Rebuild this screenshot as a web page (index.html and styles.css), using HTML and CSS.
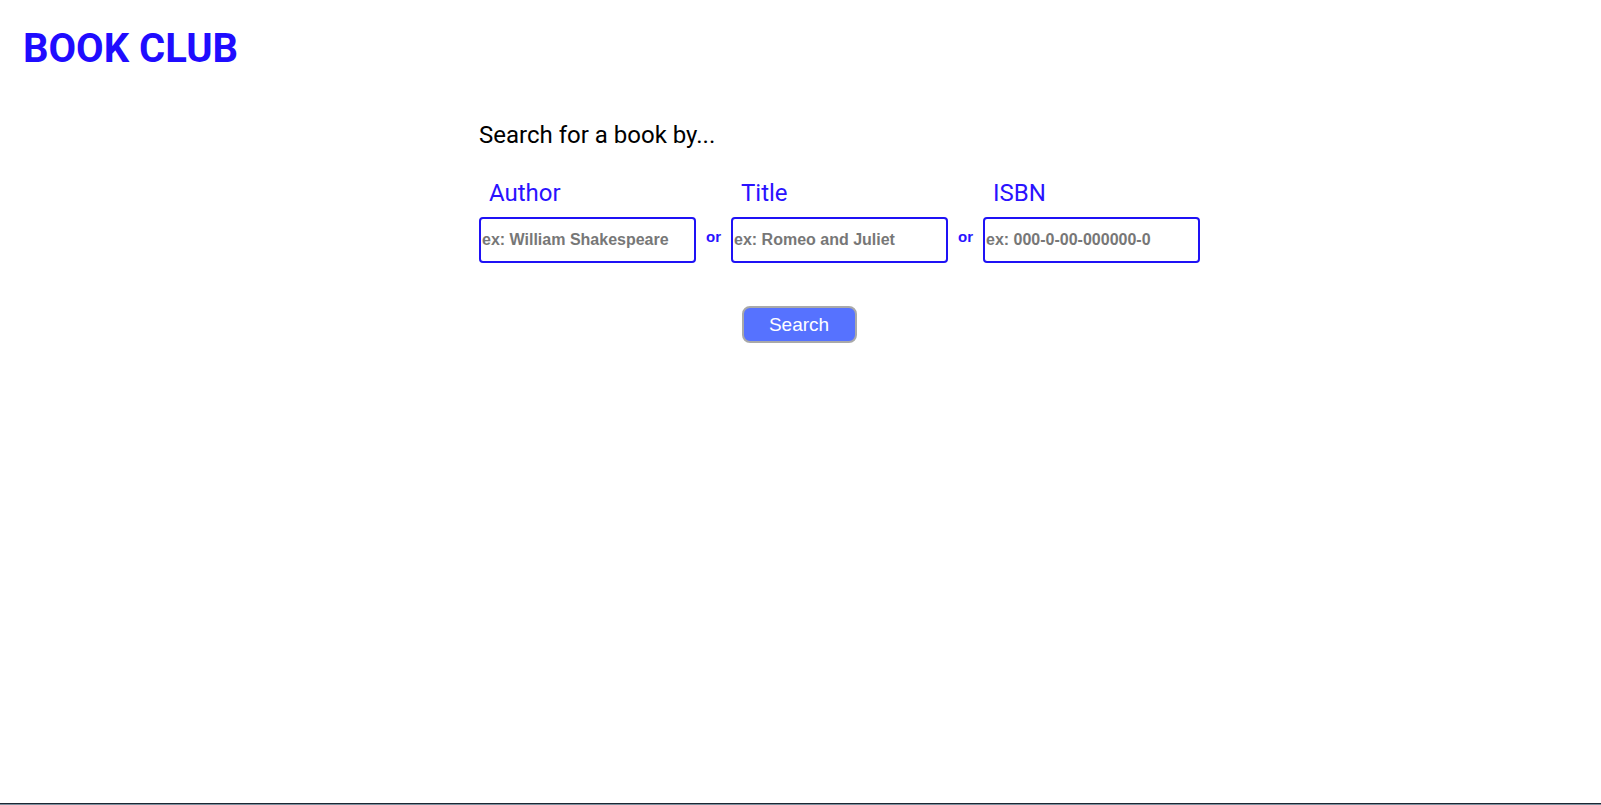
FILE: index.html
```html
<!DOCTYPE html>
<html lang="en">
<head>
<meta charset="utf-8">
<title>Book Club</title>
<link rel="stylesheet" href="styles.css">
</head>
<body>
<header class="header">
  <h1 class="logo">BOOK CLUB</h1>
</header>
<main class="search">
  <p class="intro">Search for a book by...</p>
  <form class="form">
    <div class="fields">
      <div class="field">
        <label class="label" for="author">Author</label>
        <input class="input" id="author" type="text" placeholder="ex: William Shakespeare">
      </div>
      <span class="or">or</span>
      <div class="field">
        <label class="label" for="title">Title</label>
        <input class="input" id="title" type="text" placeholder="ex: Romeo and Juliet">
      </div>
      <span class="or">or</span>
      <div class="field">
        <label class="label" for="isbn">ISBN</label>
        <input class="input" id="isbn" type="text" placeholder="ex: 000-0-00-000000-0">
      </div>
    </div>
    <div class="actions">
      <button class="button" type="button">Search</button>
    </div>
  </form>
</main>
<div class="taskbar"></div>
</body>
</html>
```
FILE: styles.css
```css
html, body {
  margin: 0;
  padding: 0;
  background: #ffffff;
}
body {
  font-family: Roboto, "Liberation Sans", sans-serif;
  height: 805px;
  overflow: hidden;
}
.header {
  padding: 27px 23px 0;
}
.logo {
  margin: 0;
  font-family: Roboto, sans-serif;
  font-weight: 700;
  font-size: 40px;
  line-height: 44px;
  color: #1f0cff;
}
.search {
  width: 643px;
  margin: 0 auto;
  padding-top: 49px;
}
.intro {
  margin: 0;
  font-size: 24px;
  line-height: 30px;
  color: #000;
}
.form {
  margin-top: 29px;
}
.fields {
  display: flex;
  align-items: flex-end;
  width: 740px;
}
.field {
  display: flex;
  flex-direction: column;
}
.label {
  padding-left: 10px;
  font-size: 24px;
  line-height: 28px;
  color: #2a12ff;
  margin-bottom: 10px;
}
.input {
  box-sizing: border-box;
  width: 217px;
  height: 46px;
  margin: 0;
  padding: 0 1px;
  border: 2px solid #1f12f5;
  border-radius: 4px;
  font-family: "Liberation Sans", Arial, sans-serif;
  font-weight: 700;
  font-size: 16px;
  color: #333;
  outline: none;
}
.input::placeholder {
  color: #777;
  opacity: 1;
}
.or {
  width: 35px;
  text-align: center;
  font-family: "Liberation Sans", Arial, sans-serif;
  font-weight: 700;
  font-size: 15px;
  line-height: 46px;
  height: 46px;
  color: #2a12ff;
  transform: translateY(-3px);
}
.actions {
  display: flex;
  justify-content: center;
  margin-top: 43px;
  padding-right: 3px;
}
.button {
  box-sizing: border-box;
  width: 115px;
  height: 37px;
  border: 2px solid #a9a9a9;
  border-radius: 8px;
  background: #5672ff;
  color: #fff;
  font-family: "Liberation Sans", Arial, sans-serif;
  font-size: 19px;
  padding: 0;
}
.taskbar {
  position: fixed;
  left: 0;
  right: 0;
  bottom: 0;
  height: 1px;
  border-top: 1px solid #1c2733;
  background: #7d8f9d;
}
```
